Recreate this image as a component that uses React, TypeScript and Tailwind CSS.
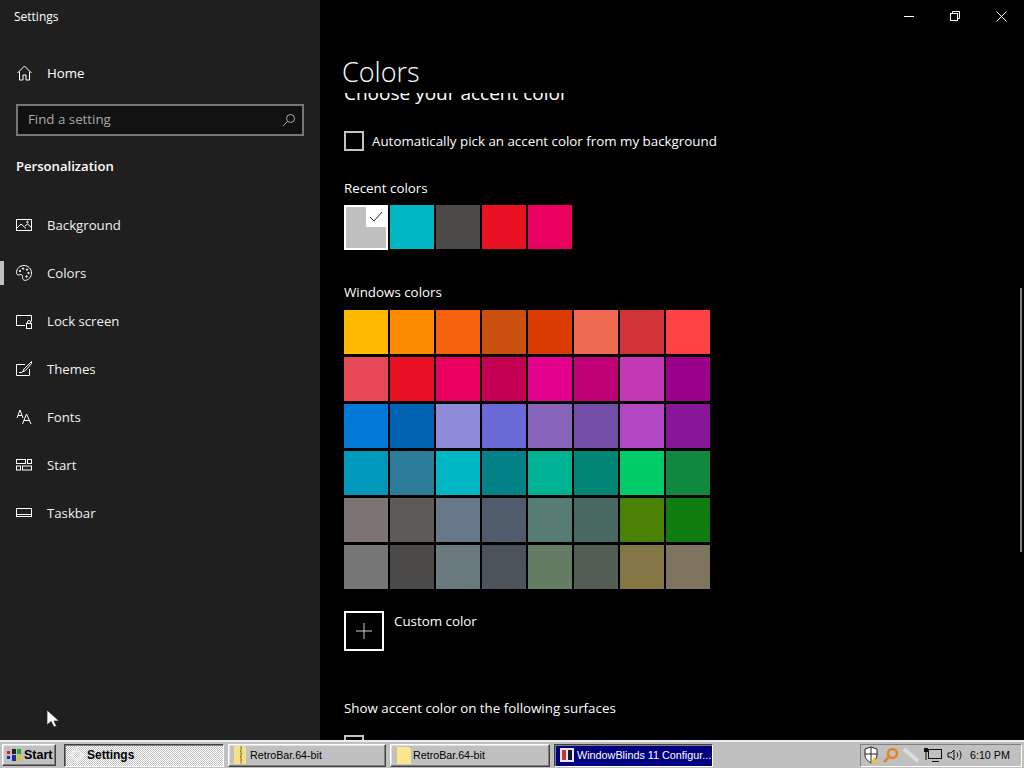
import React from 'react';

const FONT = "font-['Open_Sans','Noto_Sans',sans-serif]";

const windowsColors = [
  ['#FFB900', '#FF8C00', '#F7630C', '#CA5010', '#DA3B01', '#EF6950', '#D13438', '#FF4343'],
  ['#E74856', '#E81123', '#EA005E', '#C30052', '#E3008C', '#BF0077', '#C239B3', '#9A0089'],
  ['#0078D7', '#0063B1', '#8E8CD8', '#6B69D6', '#8764B8', '#744DA9', '#B146C2', '#881798'],
  ['#0099BC', '#2D7D9A', '#00B7C3', '#038387', '#00B294', '#018574', '#00CC6A', '#10893E'],
  ['#7A7574', '#5D5A58', '#68768A', '#515C6B', '#567C73', '#486860', '#498205', '#107C10'],
  ['#767676', '#4C4A48', '#69797E', '#4A5459', '#647C64', '#525E54', '#847545', '#7E735F'],
];

const recentColors = ['#00B7C3', '#4C4A48', '#E81123', '#EA005E'];

const Icon: React.FC<{ children: React.ReactNode }> = ({ children }) => (
  <svg width="16" height="16" viewBox="0 0 16 16" fill="none" stroke="#fff" strokeWidth="1" className="shrink-0">
    {children}
  </svg>
);

const navItems: { label: string; icon: React.ReactNode }[] = [
  {
    label: 'Background',
    icon: (
      <Icon>
        <rect x="0.5" y="2.5" width="15" height="11" />
        <path d="M1 11l4-4 5 4.5M9 9l2.5-2 4 3.5" />
        <circle cx="11.5" cy="5" r="0.8" />
      </Icon>
    ),
  },
  {
    label: 'Colors',
    icon: (
      <Icon>
        <path d="M8 .5C3.8.5.5 3.6.5 7.600c0 2 1.300 2.600 2.600 2.300 1.500-.4 3-.5 3.400.7.4 1.200-.4 2 .2 3.200.5 1 1.300 1.700 2.500 1.600 3.500-.4 6.300-3.600 6.300-7.300C15.500 3.800 12.200.5 8 .5z" />
        <circle cx="4" cy="6" r="0.7" fill="#fff" />
        <circle cx="7" cy="3.600" r="0.7" fill="#fff" />
        <circle cx="11" cy="4.600" r="0.7" fill="#fff" />
        <circle cx="12.500" cy="8" r="0.7" fill="#fff" />
        <circle cx="10.500" cy="11.500" r="0.7" fill="#fff" />
      </Icon>
    ),
  },
  {
    label: 'Lock screen',
    icon: (
      <Icon>
        <path d="M9 12.500H.5v-10h15v6" />
        <rect x="10.500" y="10.500" width="5" height="5" />
        <path d="M11.500 10.500V9a1.500 1.500 0 013 0v1.500" />
      </Icon>
    ),
  },
  {
    label: 'Themes',
    icon: (
      <Icon>
        <path d="M9 3.500H.5v11h13V8" />
        <path d="M15.500.5L8 8l-1.500 3 3-1.500 6-7z" />
        <path d="M3 11.500h3" />
      </Icon>
    ),
  },
  {
    label: 'Fonts',
    icon: (
      <Icon>
        <path d="M1 9l3-8 3 8M2 6.500h4" />
        <path d="M6.500 15l4-10 4.500 10M8 11.500h5.500" />
      </Icon>
    ),
  },
  {
    label: 'Start',
    icon: (
      <Icon>
        <rect x="0.5" y="2.500" width="9" height="4" />
        <rect x="11.500" y="2.500" width="4" height="4" />
        <rect x="0.5" y="9" width="4" height="4" />
        <rect x="6.500" y="9" width="9" height="4" />
      </Icon>
    ),
  },
  {
    label: 'Taskbar',
    icon: (
      <Icon>
        <rect x="0.5" y="3.500" width="15" height="8" />
        <path d="M0 9.500h16" />
      </Icon>
    ),
  },
];

const Swatch: React.FC<{ color: string }> = ({ color }) => (
  <div className="w-[44px] h-[44px]" style={{ backgroundColor: color }} />
);

const Sidebar = () => (
  <aside className="w-[320px] shrink-0 bg-[#1f1f1f] text-white">
    <div className="h-[32px] pl-[14px] pt-[2px] flex items-center text-[12px]">Settings</div>
    <div className="h-[48px] mt-[17px] pl-[17px] flex items-center gap-[15px] text-[13.300px]">
      <svg width="15" height="16" viewBox="0 0 15 16" fill="none" stroke="#fff" className="shrink-0">
        <path d="M.5 8L7.500 1l7 7M2.500 6.500v8.500h3.500v-5h3v5h3.500V6.500" />
      </svg>
      <span className="pt-[1px]">Home</span>
    </div>
    <div className="mx-[16px] mt-[7px] h-[32px] border-2 border-[#777] bg-[#111] flex items-center justify-between pl-[10px] pr-[6px]">
      <span className="text-[13.300px] text-[#a8a8a8]">Find a setting</span>
      <svg width="14" height="14" viewBox="0 0 14 14" fill="none" stroke="#aaa">
        <circle cx="8.500" cy="5.500" r="4" />
        <path d="M5.500 8.500L1 13" />
      </svg>
    </div>
    <div className="mt-[20px] pl-[16px] text-[13.100px] font-semibold leading-[20px]">Personalization</div>
    <nav className="mt-[25px]">
      {navItems.map((item) => (
        <div key={item.label} className="relative h-[48px] pl-[16px] flex items-center gap-[15px] text-[13.200px] text-[#f0f0f0]">
          {item.label === 'Colors' && <div className="absolute left-0 top-[12px] w-[4px] h-[24px] bg-[#c0c0c0]" />}
          {item.icon}
          <span className="pt-[1px]">{item.label}</span>
        </div>
      ))}
    </nav>
  </aside>
);

const TitleButtons = () => (
  <div className="h-[32px] flex justify-end">
    <div className="w-[46px] flex items-center justify-center">
      <div className="w-[10px] h-px bg-white" />
    </div>
    <div className="w-[46px] flex items-center justify-center">
      <svg width="10" height="10" viewBox="0 0 10 10" fill="none" stroke="#fff">
        <path d="M2.500 2.500V.5h7v7h-2" />
        <rect x="0.5" y="2.500" width="7" height="7" />
      </svg>
    </div>
    <div className="w-[46px] flex items-center justify-center">
      <svg width="11" height="11" viewBox="0 0 11 11" stroke="#fff">
        <path d="M.5.5l10 10M10.500.5l-10 10" />
      </svg>
    </div>
  </div>
);

const Content = () => (
  <main className="relative flex-1 min-w-0 flex flex-col bg-black text-white">
    <TitleButtons />
    <h1 className="h-[61px] pl-[22px] pt-[20px] text-[27px] leading-[40px] font-light shrink-0">Colors</h1>
    <div className="flex-1 overflow-hidden pl-[24px]">
      <div className="-mt-[14px] text-[19px] leading-[28px]">Choose your accent color</div>
      <div className="mt-[24px] flex items-center gap-[8px] text-[13.350px] leading-[20px]">
        <div className="w-[20px] h-[20px] border-2 border-[#c4c4c4]" />
        <span>Automatically pick an accent color from my background</span>
      </div>
      <div className="mt-[27px] text-[13.350px] leading-[20px]">Recent colors</div>
      <div className="mt-[7px] flex gap-[2px]">
        <div className="relative w-[44px] h-[45px] border-2 border-white bg-[#c0c0c0]">
          <div className="absolute right-0 top-0 w-[20px] h-[20px] bg-white flex items-center justify-center">
            <svg width="14" height="12" viewBox="0 0 14 12" fill="none" stroke="#222">
              <path d="M1 6l4 4 8-9" />
            </svg>
          </div>
        </div>
        {recentColors.map((c) => (
          <Swatch key={c} color={c} />
        ))}
      </div>
      <div className="mt-[32px] text-[13.350px] leading-[20px]">Windows colors</div>
      <div className="mt-[8px] flex flex-col gap-[3px]">
        {windowsColors.map((row) => (
          <div key={row[0]} className="flex gap-[2px]">
            {row.map((c) => (
              <Swatch key={c} color={c} />
            ))}
          </div>
        ))}
      </div>
      <div className="mt-[22px] flex gap-[10px]">
        <div className="w-[40px] h-[40px] border-2 border-white flex items-center justify-center">
          <svg width="18" height="18" viewBox="0 0 18 18" stroke="#ccc">
            <path d="M9 1v16M1 9h16" />
          </svg>
        </div>
        <span className="text-[13.350px] leading-[20px]">Custom color</span>
      </div>
      <div className="mt-[47px] text-[13.350px] leading-[20px]">Show accent color on the following surfaces</div>
      <div className="mt-[17px] flex items-center gap-[8px] text-[13.350px] leading-[20px]">
        <div className="w-[20px] h-[20px] border-2 border-[#c4c4c4]" />
        <span>Start, taskbar, and action center</span>
      </div>
    </div>
    <div className="absolute left-[700px] top-[288px] w-[2px] h-[264px] bg-[#808080]" />
  </main>
);

const raised = 'border border-t-white border-l-white border-r-[#404040] border-b-[#404040] shadow-[inset_-1px_-1px_0_#808080,inset_1px_1px_0_#dfdfdf]';
const pressed = 'border border-t-[#404040] border-l-[#404040] border-r-white border-b-white shadow-[inset_1px_1px_0_#808080]';

const Folder = () => (
  <svg width="16" height="20" viewBox="0 0 16 20" className="shrink-0">
    <path d="M2 1h11l1 2v16H2z" fill="#f7e08a" />
    <path d="M8 1h2v18H8z" fill="#c9b062" />
    <path d="M9 3h1M8 6h1M9 9h1M8 12h1M9 15h1" stroke="#555" />
  </svg>
);

const Taskbar = () => (
  <footer className="h-[28px] shrink-0 bg-[#c0c0c0] border-t-2 border-[#ececec] flex items-center pl-[2px] pr-[2px] gap-[4px] font-['Liberation_Sans',Arial,sans-serif] text-[10.700px] text-black">
    <div className={`w-[54px] h-[22px] mr-[4px] flex items-center gap-[2px] pl-[3px] font-bold text-[12.500px] ${raised}`}>
      <svg width="16" height="14" viewBox="0 0 16 14" className="shrink-0">
        <path d="M1 3h3v3H1z" fill="#c22" />
        <path d="M1 8h3v3H1z" fill="#22c" />
        <path d="M6 1h4v5H6z" fill="#222" />
        <path d="M11 1h4v5h-4z" fill="#2a2" />
        <path d="M6 7h4v6H6z" fill="#22a" />
        <path d="M11 7h4v6h-4z" fill="#cc2" />
      </svg>
      <span>Start</span>
    </div>
    <div className={`w-[160px] h-[23px] flex items-center gap-[2px] pl-[4px] font-bold text-[12px] bg-[repeating-conic-gradient(#ffffff_0_25%,#c0c0c0_0_50%)] bg-[length:2px_2px] ${pressed}`}>
      <svg width="16" height="16" viewBox="0 0 16 16" fill="none" stroke="#eee" strokeWidth="2" className="shrink-0">
        <circle cx="8" cy="8" r="4.500" />
        <path d="M8 0v3M8 13v3M0 8h3M13 8h3" />
      </svg>
      <span>Settings</span>
    </div>
    <div className={`w-[158px] h-[23px] flex items-center gap-[2px] pl-[3px] ${raised}`}>
      <Folder />
      <span>RetroBar.64-bit</span>
    </div>
    <div className={`w-[160px] h-[23px] flex items-center gap-[1px] pl-[5px] ${raised}`}>
      <svg width="16" height="20" viewBox="0 0 16 20" className="shrink-0">
        <path d="M1 2h12l2 2v15H1z" fill="#fbe58e" />
      </svg>
      <span>RetroBar.64-bit</span>
    </div>
    <div className={`w-[159px] h-[23px] flex items-center gap-[2px] pl-[4px] bg-[#000080] text-white text-[10.800px] ${pressed}`}>
      <svg width="16" height="16" viewBox="0 0 16 16" className="shrink-0">
        <rect x="1" y="1" width="14" height="14" fill="#e6e6f2" />
        <rect x="3" y="3" width="4" height="10" fill="#c33" />
        <rect x="9" y="3" width="4" height="10" fill="#113" />
      </svg>
      <span className="whitespace-nowrap">WindowBlinds 11 Configur...</span>
    </div>
    <div className="flex-1" />
    <div className="w-[162px] h-[23px] flex items-center pl-[1px] border border-t-[#808080] border-l-[#808080] border-r-white border-b-white">
      <div className="w-[107px] pl-[1px] flex items-center gap-[4px]">
        <svg width="16" height="18" viewBox="0 0 16 18" className="shrink-0">
          <path d="M8 1l6 2v6c0 4-3 6-6 8-3-2-6-4-6-8V3z" fill="#fff" stroke="#222" />
          <path d="M8 1v16M2 8h12" stroke="#222" />
          <path d="M11 11l4 6H8z" fill="#f2c230" />
        </svg>
        <svg width="16" height="16" viewBox="0 0 16 16" fill="none" className="shrink-0">
          <circle cx="9.500" cy="6.500" r="4.500" stroke="#e8821e" strokeWidth="2.500" />
          <path d="M6 10l-5 5" stroke="#e8821e" strokeWidth="2.500" />
        </svg>
        <svg width="16" height="16" viewBox="0 0 16 16" className="shrink-0">
          <path d="M1 2l14 12" stroke="#dcdcdc" strokeWidth="4" />
        </svg>
        <svg width="20" height="16" viewBox="0 0 20 16" fill="none" stroke="#111" className="shrink-0">
          <rect x="5.500" y="2.500" width="13" height="9" />
          <rect x="1.500" y="1.500" width="3" height="3" fill="#111" />
          <path d="M3 5v8M9 14.500h7" />
        </svg>
        <svg width="16" height="14" viewBox="0 0 16 14" fill="none" stroke="#111" className="shrink-0">
          <path d="M1 5v4h3l3 3V2L4 5zM10 4.500c1 1.500 1 3.500 0 5M12.500 2.500c2 2.500 2 6.500 0 9" />
        </svg>
      </div>
      <span className="pl-[1px] whitespace-nowrap">6:10 PM</span>
    </div>
  </footer>
);

export default function App() {
  return (
    <div className={`relative w-[1024px] h-[768px] overflow-hidden flex flex-col ${FONT}`}>
      <div className="flex-1 min-h-0 flex">
        <Sidebar />
        <Content />
      </div>
      <Taskbar />
      <svg width="13" height="19" viewBox="0 0 13 19" className="absolute left-[46px] top-[709px]">
        <path d="M1 1v15l4-3.500L8 18l2.500-1L8 12h5z" fill="#fff" stroke="#222" strokeWidth="0.700" />
      </svg>
    </div>
  );
}
